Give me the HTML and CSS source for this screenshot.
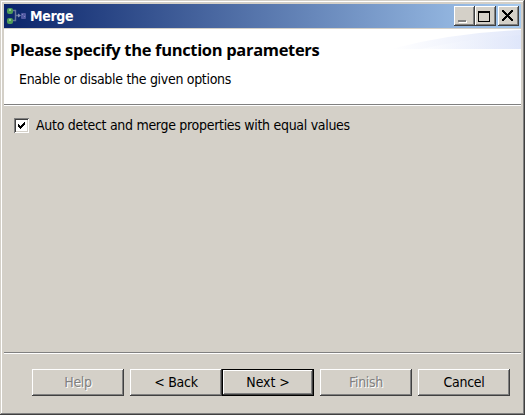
FILE: index.html
```
<!DOCTYPE html>
<html lang="en">
<head>
<meta charset="utf-8">
<title>Merge</title>
<link rel="stylesheet" href="styles.css">
</head>
<body>
<div class="window">
  <div class="titlebar">
    <svg class="app-icon" width="20" height="18" viewBox="0 0 20 18">
      <path d="M6 3.500h2.500v10H6M8.500 8.500h4" fill="none" stroke="#68769a" stroke-width="1.400"/>
      <path d="M11 6.500l3 2-3 2z" fill="#8794b5"/>
      <rect x="0" y="1" width="6" height="6" rx="2" fill="#4f9a58"/>
      <rect x="0" y="11" width="6" height="6" rx="2" fill="#4f9a58"/>
      <path d="M2 2h2v2H2zM2 12h2v2H2z" fill="#8fca87"/>
      <rect x="14" y="6" width="5" height="6" rx="1" fill="#5159a2"/>
      <path d="M15 7h1v1h-1zM17 9h1v1h-1z" fill="#8187c3"/>
    </svg>
    <span class="caption">Merge</span>
    <div class="controls">
      <span class="control"><svg width="21" height="20"><path d="M5 15h8v2H5z" fill="#fff"/><path d="M4 14h8v2H4z" fill="#808080"/></svg></span>
      <span class="control"><svg width="21" height="20"><path d="M3 5h12v11H3zM4 7v8h10V7z" fill="#000" fill-rule="evenodd"/></svg></span>
      <span class="control close"><svg width="21" height="20" shape-rendering="crispEdges"><path d="M5 5l9 9M14 5l-9 9" fill="none" stroke="#000" stroke-width="2.200" stroke-linecap="square"/></svg></span>
    </div>
  </div>
  <header class="banner">
    <svg class="swoosh" width="130" height="20" viewBox="0 0 130 20">
      <defs>
        <linearGradient id="a"><stop offset="0" stop-color="#fff"/><stop offset="1" stop-color="#e2e8fa"/></linearGradient>
        <linearGradient id="b"><stop offset="0" stop-color="#fff"/><stop offset="1" stop-color="#dde5fa"/></linearGradient>
      </defs>
      <path d="M0 20Q60 4 130 1V20Z" fill="url(#a)"/>
      <path d="M30 20Q80 9 130 6V20Z" fill="url(#b)" opacity=".6"/>
    </svg>
    <h1 class="heading">Please specify the function parameters</h1>
    <p class="description">Enable or disable the given options</p>
  </header>
  <main class="content">
    <label class="option">
      <span class="checkbox"><svg width="11" height="11"><path d="M2 4v3l2 2 5-5V1L4 6z" fill="#000" shape-rendering="crispEdges"/></svg></span>
      <span class="option-text">Auto detect and merge properties with equal values</span>
    </label>
  </main>
  <footer class="actions">
    <button class="button help" disabled><span>Help</span></button>
    <button class="button back"><span>&lt; Back</span></button>
    <button class="button next"><span>Next &gt;</span></button>
    <button class="button finish" disabled><span>Finish</span></button>
    <button class="button cancel"><span>Cancel</span></button>
  </footer>
</div>
</body>
</html>
```
FILE: styles.css
```
* { box-sizing: border-box; }
body { margin: 0; background: #d4d0c8; }
.window {
  width: 525px; height: 415px; padding: 4px;
  display: flex; flex-direction: column;
  background: #d4d0c8; color: #000;
  font: 14px/18px "DejaVu Sans Condensed", "DejaVu Sans", sans-serif;
  font-stretch: condensed;
  letter-spacing: -.3px;
  box-shadow: inset -1px -1px #404040, inset 1px 1px #d4d0c8, inset -2px -2px #808080, inset 2px 2px #fff;
}
.titlebar {
  height: 24px; flex: none; display: flex; align-items: center;
  padding: 0 2px 0 3px; background: linear-gradient(90deg, #0a246a, #a6caf0);
}
.app-icon { flex: none; }
.caption { margin-left: 3px; color: #fff; font-weight: bold; letter-spacing: -.35px; white-space: nowrap; }
.controls { margin-left: auto; display: flex; }
.control {
  width: 21px; height: 20px; background: #d4d0c8;
  box-shadow: inset -1px -1px #404040, inset 1px 1px #fff, inset -2px -2px #808080;
}
.control svg { display: block; }
.close { margin-left: 2px; }
.banner {
  position: relative; height: 76px; flex: none; margin-top: 1px;
  background: #fff; border-bottom: 1px solid #808080;
}
.swoosh { position: absolute; right: 0; top: 0; }
.heading {
  position: relative; margin: 0; padding: 10px 0 0 6px; white-space: nowrap;
  font: bold 16.500px/22px "Open Sans", "Noto Sans", sans-serif;
  letter-spacing: -.33px;
}
.description { margin: 0; padding: 9px 0 0 15px; white-space: nowrap; }
.content { flex: 1; border-top: 1px solid #fff; border-bottom: 1px solid #808080; padding: 10px; }
.option { display: flex; align-items: center; height: 18px; white-space: nowrap; }
.checkbox {
  width: 15px; height: 15px; padding: 2px; background: #fff;
  box-shadow: inset 1px 1px #808080, inset -1px -1px #fff, inset 2px 2px #404040, inset -2px -2px #d4d0c8;
}
.checkbox svg { display: block; }
.option-text { margin-left: 7px; }
.actions {
  height: 58px; flex: none; border-top: 1px solid #fff;
  display: flex; padding: 15px 0 0 28px;
}
.button {
  width: 92px; height: 27px; margin: 0 6px 0 0; padding: 0 0 1px; border: 0;
  background: #d4d0c8; color: #000; font: inherit; letter-spacing: -.3px; white-space: nowrap;
  box-shadow: inset -1px -1px #404040, inset 1px 1px #fff, inset -2px -2px #808080;
}
.back { margin-right: 0; }
.next {
  border: 1px solid #000;
  letter-spacing: -.1px;
}
.button:disabled { color: #808080; text-shadow: 1px 1px #fff; }
```
